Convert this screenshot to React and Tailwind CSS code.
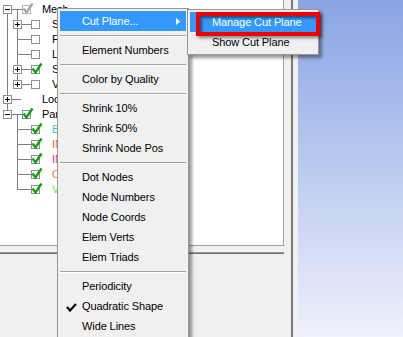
const rows = [
  { lvl: 0, exp: '-', chk: 'gray', label: 'Mesh', first: true },
  { lvl: 1, exp: '+', chk: 'empty', label: 'S', up: true },
  { lvl: 1, chk: 'empty', label: 'F', up: true },
  { lvl: 1, chk: 'empty', label: 'L', up: true },
  { lvl: 1, exp: '+', chk: 'green', label: 'S', up: true },
  { lvl: 1, exp: '+', chk: 'empty', label: 'V', up: true, last: true },
  { lvl: 0, exp: '+', label: 'Loc' },
  { lvl: 0, exp: '-', chk: 'green', label: 'Par', last: true },
  { lvl: 1, chk: 'green', label: 'B', color: '#2fdc8c' },
  { lvl: 1, chk: 'green', label: 'IN', color: '#ff6633' },
  { lvl: 1, chk: 'green', label: 'IN', color: '#ff3366' },
  { lvl: 1, chk: 'green', label: 'O', color: '#ff7a2e' },
  { lvl: 1, chk: 'green', label: 'V', color: '#66ee44', last: true },
];

const LINE = '#808080';

// expander box with +/- centred on pixel column cx
function Expander({ cx, sign }) {
  return (
    <g>
      <rect x={cx - 3.5} y={3.5} width={8} height={8} fill="#fff" stroke="#909090" />
      <line x1={cx - 2} y1={7.5} x2={cx + 3} y2={7.5} stroke="#000" />
      {sign === '+' && <line x1={cx + 0.5} y1={5} x2={cx + 0.5} y2={10} stroke="#000" />}
    </g>
  );
}

function Check({ x, kind }) {
  const gray = kind === 'gray';
  return (
    <g>
      <rect x={x + 0.5} y={3.5} width={8} height={8} fill="#fff" stroke={gray ? '#b0b0b0' : '#909090'} />
      {kind !== 'empty' && (
        <path
          d={`M${x + 1.5} 6.5 L${x + 4.5} 10.5 L${x + 10.5} 1.5`}
          fill="none"
          stroke={gray ? '#a8a8a8' : '#14a014'}
          strokeWidth="2.4"
          strokeLinejoin="miter"
        />
      )}
    </g>
  );
}

function TreeRow({ r }) {
  const w = r.lvl === 0 ? 42 : 52;
  return (
    <div className="flex h-[15px] items-center">
      <svg width={w} height={15} className="shrink-0 overflow-visible">
        {r.lvl === 0 ? (
          <g>
            {!r.first && <line x1={7.5} y1={0} x2={7.5} y2={7.5} stroke={LINE} />}
            {!r.last && <line x1={7.5} y1={7.5} x2={7.5} y2={15} stroke={LINE} />}
            <line x1={7} y1={7.5} x2={r.chk ? 22 : 21} y2={7.5} stroke={LINE} />
            {r.exp === '-' && <line x1={17.5} y1={7.5} x2={17.5} y2={15} stroke={LINE} />}
            {r.exp && <Expander cx={7} sign={r.exp} />}
            {r.chk && <Check x={22} kind={r.chk} />}
          </g>
        ) : (
          <g>
            {r.up && <line x1={7.5} y1={0} x2={7.5} y2={15} stroke={LINE} />}
            <line x1={17.5} y1={0} x2={17.5} y2={r.last ? 7.5 : 15} stroke={LINE} />
            <line x1={17} y1={7.5} x2={31} y2={7.5} stroke={LINE} />
            {r.exp && <Expander cx={17} sign={r.exp} />}
            <Check x={31} kind={r.chk} />
          </g>
        )}
      </svg>
      <span className="whitespace-nowrap" style={{ color: r.color || '#000' }}>
        {r.label}
      </span>
    </div>
  );
}

const menu = [
  { t: 'Cut Plane...', hot: true, sub: true },
  'sep',
  { t: 'Element Numbers' },
  'sep',
  { t: 'Color by Quality' },
  'sep',
  { t: 'Shrink 10%' },
  { t: 'Shrink 50%' },
  { t: 'Shrink Node Pos' },
  'sep',
  { t: 'Dot Nodes' },
  { t: 'Node Numbers' },
  { t: 'Node Coords' },
  { t: 'Elem Verts' },
  { t: 'Elem Triads' },
  'sep',
  { t: 'Periodicity' },
  { t: 'Quadratic Shape', checked: true },
  { t: 'Wide Lines' },
];

function MenuItem({ item }) {
  return (
    <div
      className={`relative flex h-[20px] items-center pl-[22px] ${
        item.hot ? 'bg-[#3399ff] text-white' : 'text-black'
      }`}
    >
      {item.checked && (
        <svg width="11" height="9" viewBox="0 0 11 9" className="absolute left-[6px] top-[7px]">
          <path d="M1 4 L4 7.5 L10 1" fill="none" stroke="#000" strokeWidth="2.2" />
        </svg>
      )}
      <span className="whitespace-nowrap">{item.t}</span>
      {item.sub && (
        <svg width="4" height="7" viewBox="0 0 4 7" className="absolute right-[6px] top-[7px]">
          <path d="M0 0 L4 3.5 L0 7 Z" fill="#fff" />
        </svg>
      )}
    </div>
  );
}

export default function App() {
  return (
    <div className="relative flex h-[337px] w-[403px] overflow-hidden bg-[#f0f0f0] font-['Liberation_Sans',Arial,sans-serif] text-[11px] tracking-[-0.1px]">
      {/* left panel: tree + gray strip */}
      <div className="flex w-[291px] shrink-0 flex-col">
        <div className="h-[246px] w-[284px] border-b border-r border-[#a0a0a0] bg-white pt-[2px]">
          {rows.map((r, i) => (
            <TreeRow key={i} r={r} />
          ))}
        </div>
        <div className="mt-[6px] h-[2px] w-[284px] border-b border-t border-b-[#6b6b6b] border-t-[#9a9a9a]" />
      </div>

      {/* splitter */}
      <div className="w-[7px] shrink-0 border-l-2 border-[#7a7a7a]" />

      {/* viewport */}
      <div className="flex-1 bg-gradient-to-b from-[#8aa3e3] to-[#eff1fb]" />

      {/* context menu, runs past the bottom edge */}
      <div className="absolute left-[57px] top-[8px] w-[132px] border border-[#979797] bg-[#f0f0f0] px-[2px] pb-[8px] pt-[2px] shadow-[3px_3px_3px_rgba(0,0,0,0.4)]">
        {menu.map((m, i) =>
          m === 'sep' ? (
            <div key={i} className="flex h-[9px] items-center">
              <div className="h-[2px] w-full border-b border-t border-b-white border-t-[#a0a0a0]" />
            </div>
          ) : (
            <MenuItem key={i} item={m} />
          )
        )}
      </div>

      {/* sub menu */}
      <div className="absolute left-[187px] top-[9px] w-[132px] border border-[#979797] bg-[#f0f0f0] p-[2px] shadow-[3px_3px_3px_rgba(0,0,0,0.4)]">
        <MenuItem item={{ t: 'Manage Cut Plane', hot: true }} />
        <MenuItem item={{ t: 'Show Cut Plane' }} />
      </div>

      {/* annotation box */}
      <div className="absolute left-[196px] top-[12px] h-[24px] w-[124px] border-[4px] border-[#ee0000] shadow-[2px_2px_3px_rgba(0,0,0,0.45),inset_2px_2px_3px_rgba(0,0,0,0.5)]" />
    </div>
  );
}
